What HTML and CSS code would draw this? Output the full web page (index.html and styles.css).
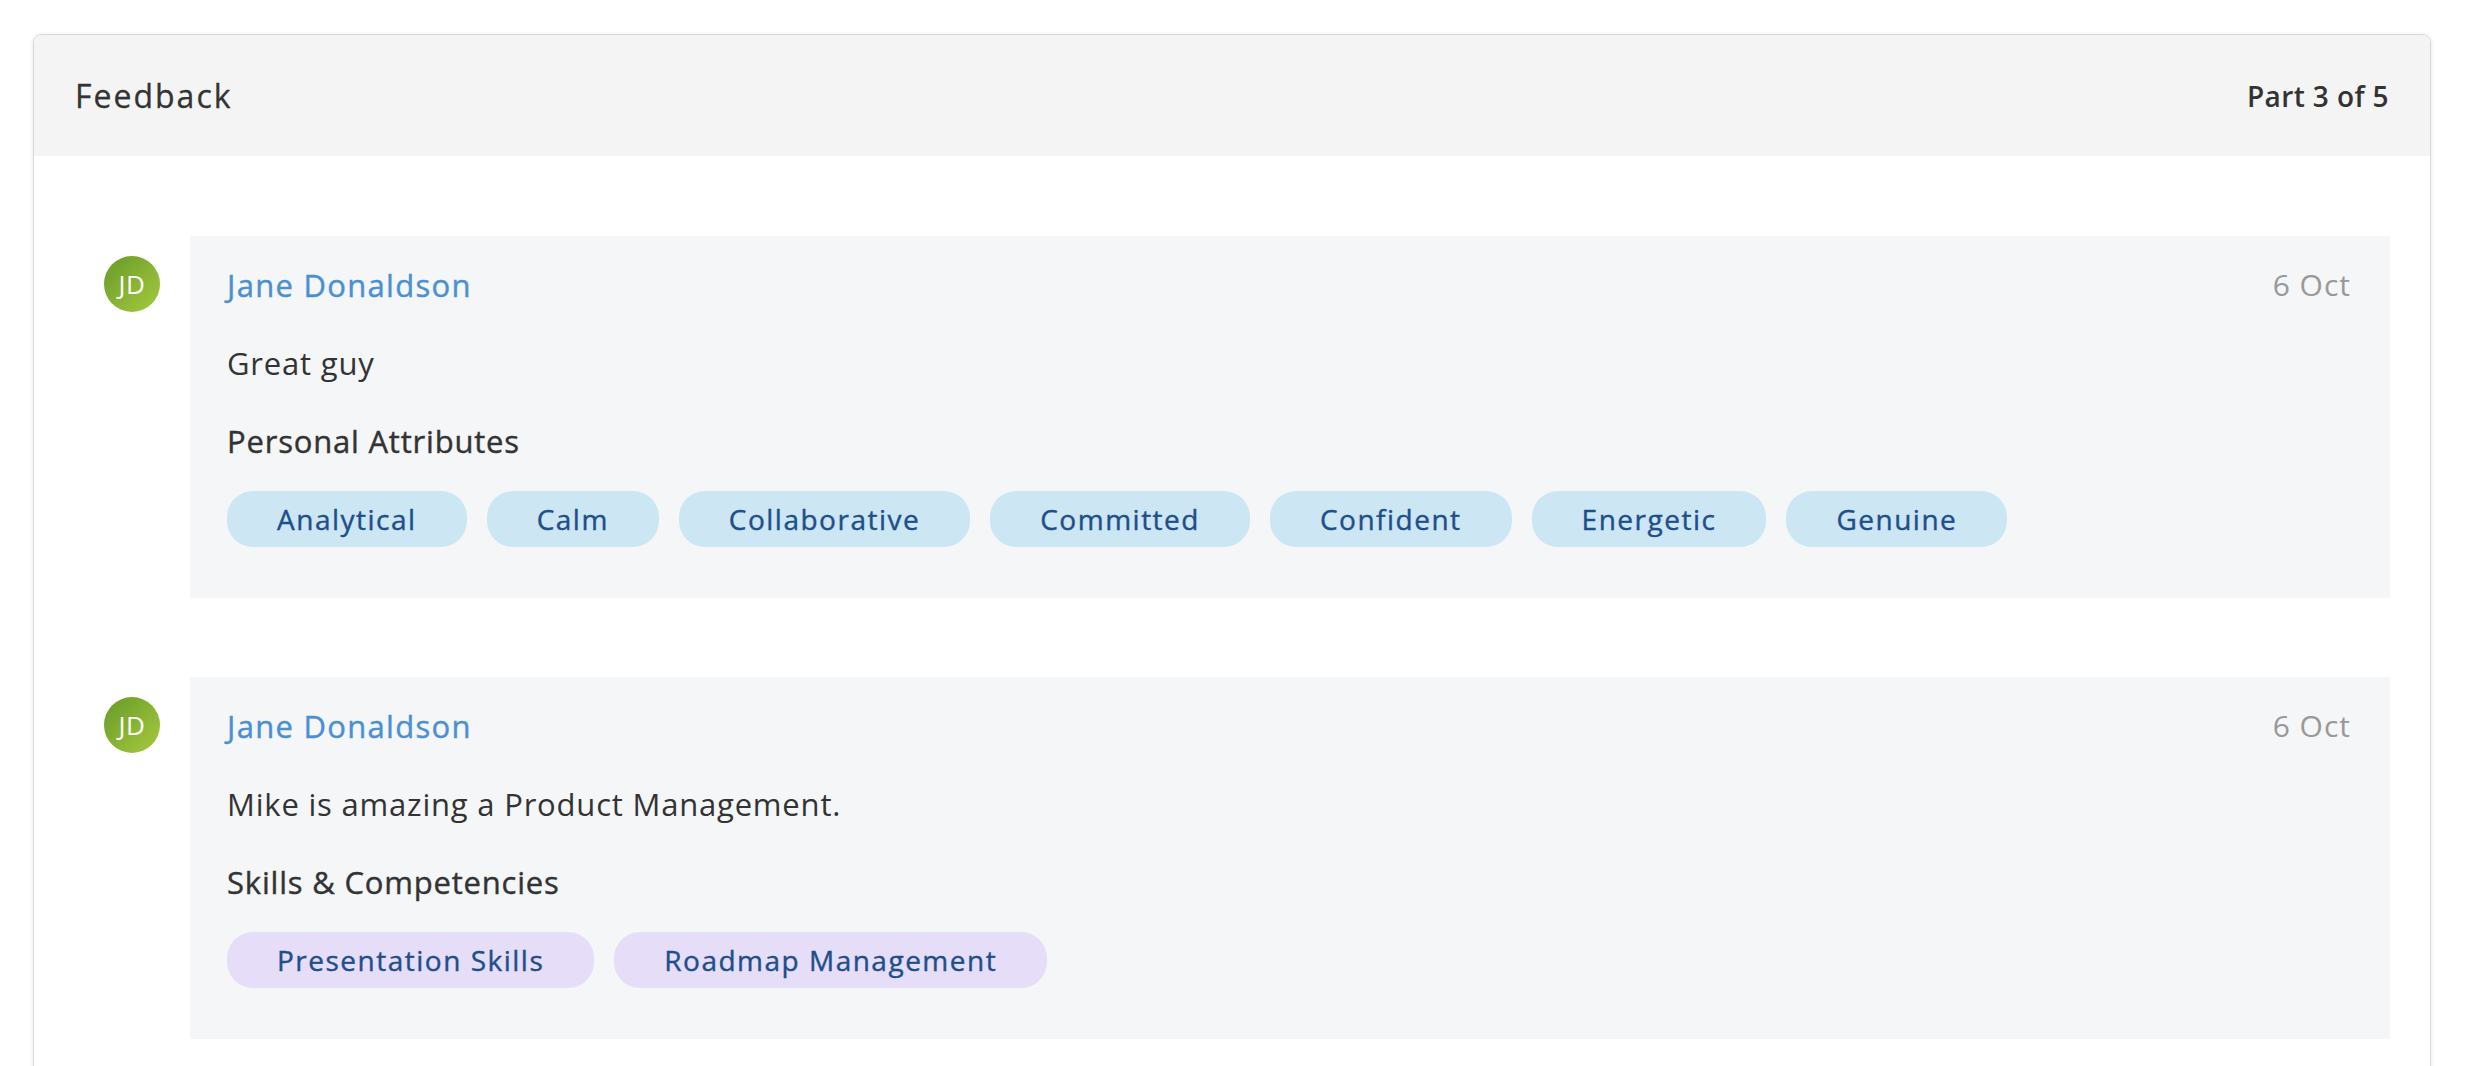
FILE: index.html
```html
<!DOCTYPE html>
<html lang="en">
<head>
    <meta charset="UTF-8">
    <meta name="viewport" content="width=device-width, initial-scale=1.0">
    <title>Feedback</title>
    <link rel="stylesheet" href="styles.css">
</head>
<body>

    <!-- Feedback Card -->
    <div class="card">
        <div class="card-header">
            <h2>Feedback</h2>
            <span class="part">Part 3 of 5</span>
        </div>

        <div class="card-body">

            <div class="entry">
                <div class="avatar">JD</div>
                <div class="entry-box">
                    <div class="entry-top">
                        <span class="author">Jane Donaldson</span>
                        <span class="date">6 Oct</span>
                    </div>
                    <p class="comment">Great guy</p>
                    <h3>Personal Attributes</h3>
                    <div class="tags">
                        <span class="tag">Analytical</span>
                        <span class="tag">Calm</span>
                        <span class="tag">Collaborative</span>
                        <span class="tag">Committed</span>
                        <span class="tag">Confident</span>
                        <span class="tag">Energetic</span>
                        <span class="tag">Genuine</span>
                    </div>
                </div>
            </div>

            <div class="entry">
                <div class="avatar">JD</div>
                <div class="entry-box">
                    <div class="entry-top">
                        <span class="author">Jane Donaldson</span>
                        <span class="date">6 Oct</span>
                    </div>
                    <p class="comment">Mike is amazing a Product Management.</p>
                    <h3>Skills &amp; Competencies</h3>
                    <div class="tags">
                        <span class="tag skill">Presentation Skills</span>
                        <span class="tag skill">Roadmap Management</span>
                    </div>
                </div>
            </div>

        </div>
    </div>

</body>
</html>
```

FILE: styles.css
```css
/* Feedback card */
* { margin: 0; padding: 0; box-sizing: border-box; }
body { background: #fff; color: #333; font-family: "Open Sans", Arial, sans-serif; }

.card {
    margin: 34px 55px 0 33px; border: 1px solid #d9d9d9; border-radius: 8px;
    box-shadow: 0 1px 4px rgba(0, 0, 0, 0.12); overflow: hidden; min-height: 1100px;
}
.card-header {
    display: flex; align-items: center; justify-content: space-between;
    height: 121px; padding: 0 41px; background: #f4f4f4;
}
.card-header h2 {
    font-size: 32px; font-weight: 500; color: #333; letter-spacing: 2px;
    -webkit-text-stroke: 0.3px #333;
}
.card-header .part { font-size: 28px; font-weight: 600; color: #333; letter-spacing: 0.4px; }

.card-body { padding: 80px 40px 0 70px; display: flex; flex-direction: column; gap: 79px; }

.entry { display: flex; align-items: flex-start; }
.avatar {
    width: 56px; height: 56px; border-radius: 50%; margin: 20px 30px 0 0; flex-shrink: 0;
    background: linear-gradient(135deg, #679a29, #a6ca3e);
    color: #fff; font-size: 26px; letter-spacing: 0.5px;
    display: flex; align-items: center; justify-content: center;
}
.entry-box { flex: 1; background: #f4f6f8; padding: 29px 39px 51px 37px; }

.entry-top { display: flex; justify-content: space-between; line-height: 40px; }
.author {
    font-size: 31px; font-weight: 500; color: #4a90d2; letter-spacing: 1.3px;
    -webkit-text-stroke: 0.4px #4a90d2;
}
.date { font-size: 30px; color: #999; letter-spacing: 1px; }

.comment { font-size: 31px; line-height: 40px; margin-top: 38px; color: #333; letter-spacing: 0.8px; }
.entry-box h3 {
    font-size: 31px; line-height: 40px; font-weight: 500; margin-top: 38px; color: #333;
    letter-spacing: 0.8px; -webkit-text-stroke: 0.4px #333;
}

.tags { display: flex; flex-wrap: wrap; gap: 20px; margin-top: 30px; }
.tag {
    height: 56px; padding: 0 50px; border-radius: 26px; background: #cce6f4;
    color: #1e4f8a; font-size: 28px; font-weight: 500; letter-spacing: 1.5px;
    -webkit-text-stroke: 0.4px #1e4f8a;
    display: flex; align-items: center;
}
.tag.skill { background: #e6ddf8; }
```
